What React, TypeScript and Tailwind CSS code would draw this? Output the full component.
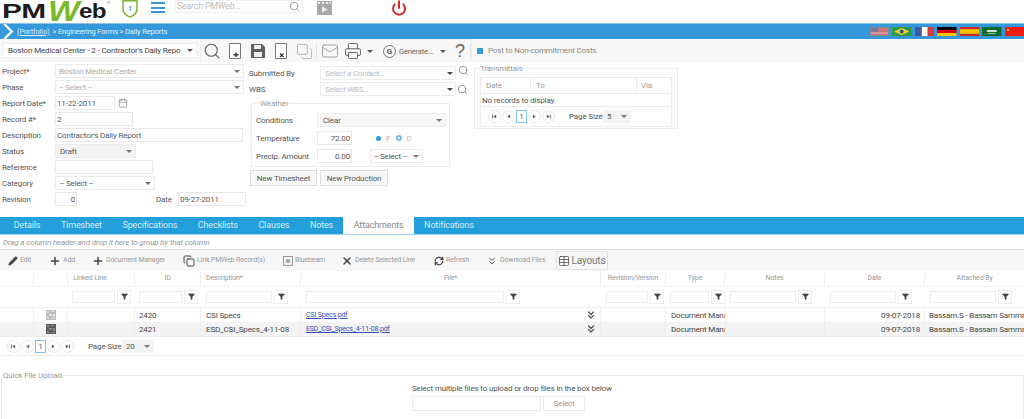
import { ChevronsDown, Filter, Plus, Search, X, RefreshCw, Pencil, Mail, Printer, Copy, Power, Table, Calendar } from 'lucide-react';
import type { ReactNode } from 'react';

const font = { fontFamily: 'Roboto, "Liberation Sans", sans-serif' };

function Caret({ className = 'text-[#777]' }: { className?: string }) {
    return <span className={`w-0 h-0 shrink-0 border-x-[3px] border-x-transparent border-t-[3px] border-t-current ${className}`} />;
}

function Box({ w, children, className = '', right }: { w: string; children?: ReactNode; className?: string; right?: boolean }) {
    return (
        <div className={`${w} h-[14px] border border-[#e8e8e8] bg-white flex items-center px-[1px] overflow-hidden whitespace-nowrap ${right ? 'justify-end' : ''} ${className}`}>
            {children}
        </div>
    );
}

function Drop({ w, text, className = '', bg = 'bg-white', pad = 'pl-[3px]' }: { w: string; text: string; className?: string; bg?: string; pad?: string }) {
    return (
        <div className={`${w} h-[14px] border border-[#ececec] ${bg} flex items-center justify-between ${pad} pr-[3px] whitespace-nowrap overflow-hidden ${className}`}>
            <span>{text}</span>
            <Caret />
        </div>
    );
}

function PagerIcon({ d }: { d: string }) {
    return (
        <span className="w-[13px] h-[13px] rounded-full border border-[#e6e6e6] flex items-center justify-center mr-[1px]">
            <svg viewBox="0 0 6 6" className="w-[5px] h-[5px]"><path d={d} fill="#666" /></svg>
        </span>
    );
}

function Pager({ size, w }: { size: string; w: string }) {
    return (
        <div className="flex items-center text-[8px] text-[#555]">
            <PagerIcon d="M0 0.5 H1 V5.5 H0 Z M5 0.5 V5.5 L1.5 3 Z" />
            <PagerIcon d="M5 0.5 V5.5 L1.5 3 Z" />
            <span className="w-[11px] h-[13px] border border-[#7fc3ea] flex items-center justify-center text-[#666] mr-[1px]">1</span>
            <PagerIcon d="M1 0.5 V5.5 L4.5 3 Z" />
            <PagerIcon d="M1 0.5 V5.5 L4.5 3 Z M5 0.5 H6 V5.5 H5 Z" />
            <span className="ml-[13px] w-[33px] mr-[1px] whitespace-nowrap">Page Size</span>
            <div className={`${w} h-[13px] bg-[#f3f3f3] flex items-center justify-between px-[4px]`}>
                <span>{size}</span>
                <Caret />
            </div>
        </div>
    );
}

function Row({ label, children, h = 'h-[16px]', w = 'w-[53px]' }: { label: string; children: ReactNode; h?: string; w?: string }) {
    return (
        <div className={`flex items-center ${h}`}>
            <span className={`${w} shrink-0 whitespace-nowrap`}>{label}</span>
            {children}
        </div>
    );
}

function Flag({ children, className = '' }: { children: ReactNode; className?: string }) {
    return <svg viewBox="0 0 20 9" preserveAspectRatio="none" className={`w-[19.5px] h-[9px] ${className}`}>{children}</svg>;
}

function Logo() {
    return (
        <div className="flex items-start h-[23px] w-[110px] pl-[2px] shrink-0 leading-none whitespace-nowrap" style={{ fontFamily: '"Liberation Sans", sans-serif' }}>
            <span className="w-[46px] text-[21px] font-bold text-[#1c1c1c] tracking-[-0.5px] scale-x-[1.42] origin-left">PM</span>
            <span className="w-[31px] h-[23px] text-[29px] leading-[23px] font-bold italic text-[#7ab929] tracking-[-1px] scale-x-[1.15] origin-left">W</span>
            <span className="w-[28px] text-[21px] font-bold text-[#1c1c1c] tracking-[-0.5px] scale-x-[1.15] origin-left">eb</span>
            <span className="text-[4px] text-[#333] mt-[1px]">®</span>
        </div>
    );
}

function RowIcon({ dark }: { dark: boolean }) {
    const a = dark ? '#5c5c5c' : '#bdbdbd';
    const b = dark ? '#8a8a8a' : '#dedede';
    return (
        <svg viewBox="0 0 10 10" className="w-[10px] h-[10px]">
            <rect width="10" height="10" fill={a} />
            <path d="M1 1 H3 V3 H1 Z M5 1 H8 V2 H5 Z M3 4 H6 V6 H3 Z M7 4 H9 V7 H7 Z M1 7 H3 V9 H1 Z M5 8 H9 V9 H5 Z" fill={b} />
        </svg>
    );
}

const tabs = ['Details', 'Timesheet', 'Specifications', 'Checklists', 'Clauses', 'Notes', 'Attachments', 'Notifications'];

const cols = 'grid grid-cols-[34px_34px_67px_66px_100px_300px_65px_59px_100px_100px_100px]';

const heads = ['', '', 'Linked Line', 'ID', 'Description*', 'File*', 'Revision/Version', 'Type', 'Notes', 'Date', 'Attached By'];

const filters: [string, string][] = [
    ['', ''],
    ['', ''],
    ['w-[43px]', 'ml-[4px]'],
    ['w-[43px]', 'ml-[4px]'],
    ['w-[66px]', 'ml-[5px]'],
    ['w-[198px]', 'ml-[5px]'],
    ['w-[42px]', 'ml-[5px]'],
    ['w-[39px]', 'ml-[4px]'],
    ['w-[66px]', 'ml-[5px]'],
    ['w-[66px]', 'ml-[5px]'],
    ['w-[66px]', 'ml-[5px]'],
];

const rows = [
    { id: '2420', desc: 'CSI Specs', file: 'CSI Specs.pdf', bg: 'bg-white', dark: false },
    { id: '2421', desc: 'ESD_CSI_Specs_4-11-08', file: 'ESD_CSI_Specs_4-11-08.pdf', bg: 'bg-[#f3f3f3]', dark: true },
];

function GridAction({ icon, label, className = '' }: { icon: ReactNode; label: string; className?: string }) {
    return (
        <span className={`flex items-center gap-[2px] whitespace-nowrap ${className}`}>
            {icon}
            {label}
        </span>
    );
}

export default function App() {
    return (
        <div className="w-[1024px] h-[419px] bg-white overflow-hidden text-[8px] leading-[11px] tracking-[-0.15px] text-[#555]" style={font}>
            {/* top header */}
            <div className="h-[23px] flex items-start">
                <Logo />
                <svg viewBox="0 0 20 22" className="w-[20px] h-[18px] ml-[10px] shrink-0">
                    <path d="M10 1 L18.5 1 V11 C18.5 16 14 19.5 10 21 C6 19.5 1.5 16 1.5 11 V1 Z" fill="none" stroke="#79b52f" strokeWidth="1.8" />
                    <text x="10" y="13" textAnchor="middle" fontSize="8" fill="#3a8fc5" fontWeight="700">1</text>
                </svg>
                <div className="w-[14px] h-[11px] ml-[11px] mt-[2px] flex flex-col justify-between shrink-0">
                    <span className="h-[2px] bg-[#3498db]" />
                    <span className="h-[2px] bg-[#3498db]" />
                    <span className="h-[2px] bg-[#3498db]" />
                </div>
                <div className="ml-[10px] w-[128px] h-[13px] border border-[#efefef] flex items-center justify-between pl-[1px] pr-[2px] italic text-[9px] text-[#bbb]">
                    Search PMWeb...
                    <Search className="w-[11px] h-[11px] text-[#777]" strokeWidth={1.5} />
                </div>
                <svg viewBox="0 0 15 14" className="ml-[14px] mt-[1px] w-[15px] h-[14px]">
                    <rect width="15" height="14" fill="#a8a8a8" />
                    <path d="M1 1 H3 V3 H1 Z M5 1 H7 V3 H5 Z M9 1 H11 V3 H9 Z M12.5 1 H14 V3 H12.5 Z" fill="#e8e8e8" />
                    <path d="M5 5.5 L10.5 8.5 L5 11.5 Z" fill="#eee" />
                </svg>
                <Power className="w-[16px] h-[16px] ml-[59px] text-[#d3262c]" strokeWidth={3} />
            </div>

            {/* breadcrumb */}
            <div className="h-[16px] bg-[#3498db] border-t border-[#8cc4ea] flex items-center text-white text-[7.5px] justify-between">
                <div className="flex items-center">
                    <svg viewBox="0 0 12 16" className="w-[12px] h-[15px] ml-[2px] mr-[3px]"><path d="M2 0 L10 8 L2 16" fill="none" stroke="#fff" strokeWidth="2.5" /></svg>
                    <span className="underline text-[#dcecf8]">(Portfolio)</span>
                    <span className="ml-[3px] text-[#e4f1fa]">&gt; Engineering Forms &gt; Daily Reports</span>
                </div>
                <div className="flex items-center gap-[3px]">
                    <Flag className="border border-[#888]">
                        <rect width="20" height="9" fill="#c97680" /><rect width="8" height="5" fill="#6f79a6" /><rect y="6" width="20" height="1" fill="#e9c9cc" />
                    </Flag>
                    <Flag><rect width="20" height="9" fill="#2f9a45" /><path d="M10 1 L18 4.5 L10 8 L2 4.5 Z" fill="#e6d52f" /><circle cx="10" cy="4.5" r="2" fill="#2d4f94" /></Flag>
                    <Flag><rect width="7" height="9" fill="#42589f" /><rect x="7" width="6" height="9" fill="#fff" /><rect x="13" width="7" height="9" fill="#d83a3f" /></Flag>
                    <Flag><rect width="20" height="3" fill="#000" /><rect y="3" width="20" height="3" fill="#d80000" /><rect y="6" width="20" height="3" fill="#f5c400" /></Flag>
                    <Flag><rect width="20" height="9" fill="#c9252b" /><rect y="2.2" width="20" height="4.6" fill="#f6c400" /></Flag>
                    <Flag><rect width="20" height="9" fill="#0f6b2c" /><rect x="5" y="3" width="10" height="2" fill="#cfe5d5" /><rect x="6" y="6" width="8" height="0.7" fill="#cfe5d5" /></Flag>
                    <Flag><rect width="20" height="9" fill="#ee1c13" /><rect x="2" y="2" width="2" height="2" fill="#f8dd20" /></Flag>
                </div>
            </div>

            {/* toolbar */}
            <div className="h-[23px] bg-[#f7f7f7] flex items-center">
                <div className="ml-[3px] w-[194px] h-[15px] bg-white border border-[#eee] flex items-center justify-between pl-[4px] pr-[3px] whitespace-nowrap text-[#444]">
                    <span className="overflow-hidden w-[177px]">Boston Medical Center - 2 - Contractor's Daily Repo</span>
                    <Caret className="text-[#555]" />
                </div>
                <div className="ml-[3px] h-[23px] border-x border-t border-[#eee] flex items-center pl-[2px] text-[#666]">
                    <Search className="w-[18px] h-[18px] text-[#666]" strokeWidth={1.5} />
                    <svg viewBox="0 0 12 16" className="w-[12px] h-[16px] ml-[8px]"><path d="M.5 .5 H11.5 V15.5 H.5 Z" fill="#fff" stroke="#777" /><path d="M7 9.5 V14 M4.5 11.7 H9.5" stroke="#333" strokeWidth="1.4" /></svg>
                    <svg viewBox="0 0 14 14" className="w-[14px] h-[14px] ml-[10px]">
                        <path d="M0 0 H11 L14 3 V14 H0 Z" fill="#5f5f5f" />
                        <rect x="3" y="1" width="7" height="4" fill="#eee" />
                        <rect x="3" y="8" width="8" height="5" fill="#eee" />
                    </svg>
                    <svg viewBox="0 0 12 16" className="w-[12px] h-[16px] ml-[10px]"><path d="M.5 .5 H11.5 V15.5 H.5 Z" fill="#fff" stroke="#777" /><path d="M5 10.5 L8.5 14 M8.5 10.5 L5 14" stroke="#333" strokeWidth="1.2" /></svg>
                    <Copy className="w-[17px] h-[17px] ml-[9px] text-[#aaa] -scale-100" strokeWidth={1.2} />
                    <span className="w-px h-[16px] bg-[#e3e3e3] ml-[3px]" />
                    <Mail className="w-[18px] h-[18px] ml-[4px] text-[#888]" strokeWidth={1} />
                    <Printer className="w-[18px] h-[18px] ml-[5px] text-[#666]" strokeWidth={1.3} />
                    <Caret className="ml-[5px] text-[#555]" />
                    <span className="w-[13px] h-[13px] ml-[10px] rounded-full border border-[#777] flex items-center justify-center font-bold text-[#555]">G</span>
                    <span className="ml-[3px] whitespace-nowrap w-[33px] text-[7.5px]">Generate...</span>
                    <Caret className="ml-[8px] text-[#555]" />
                    <span className="ml-[9px] w-[10px] text-[18px] leading-none text-[#666]" style={{ fontFamily: '"Liberation Sans", sans-serif' }}>?</span>
                    <span className="w-px h-[16px] bg-[#e3e3e3] ml-[5px]" />
                </div>
                <span className="w-[6px] h-[6px] bg-[#3498db] ml-[5px]" />
                <span className="ml-[5px] whitespace-nowrap text-[#888]">Post to Non-commitment Costs</span>
            </div>

            {/* form */}
            <div className="h-[155px] flex">
                <div className="w-[249px] pl-[2px] pt-[1px] shrink-0">
                    <Row label="Project*">
                        <Drop w="w-[189px]" text="Boston Medical Center" className="text-[#aaa]" />
                    </Row>
                    <Row label="Phase">
                        <Drop w="w-[189px]" text="-- Select --" className="text-[#aaa]" />
                    </Row>
                    <Row label="Report Date*">
                        <Box w="w-[60px]">11-22-2011</Box>
                        <Calendar className="w-[10px] h-[10px] ml-[3px] text-[#777]" strokeWidth={1.5} />
                    </Row>
                    <Row label="Record #*">
                        <Box w="w-[78px]">2</Box>
                    </Row>
                    <Row label="Description">
                        <Box w="w-[188px]">Contractor's Daily Report</Box>
                    </Row>
                    <Row label="Status">
                        <Drop w="w-[81px]" text="Draft" bg="bg-[#f3f3f3]" pad="pl-[4px]" />
                    </Row>
                    <Row label="Reference">
                        <Box w="w-[98px]" />
                    </Row>
                    <Row label="Category">
                        <Drop w="w-[100px]" text="-- Select --" pad="pl-[4px]" />
                    </Row>
                    <Row label="Revision">
                        <Box w="w-[22px]" right className="pr-[1px]">0</Box>
                        <span className="ml-[79px] mr-[6px] w-[16px]">Date</span>
                        <Box w="w-[68px]" className="border-[#bbb]">09-27-2011</Box>
                    </Row>
                </div>

                <div className="w-[225px] shrink-0 pt-[3px]">
                    <Row label="Submitted By" w="w-[71px]">
                        <div className="w-[136px] h-[14px] border border-[#ececec] flex items-center justify-between pl-[4px] pr-[2px] italic text-[#bbb]">
                            Select a Contact...
                            <Caret className="text-[#444]" />
                        </div>
                        <Search className="w-[11px] h-[11px] ml-[2px] -mt-[5px] text-[#666]" strokeWidth={1.5} />
                    </Row>
                    <Row label="WBS" w="w-[71px]">
                        <div className="w-[136px] h-[14px] border border-[#ececec] flex items-center justify-between pl-[4px] pr-[2px] italic text-[#bbb]">
                            Select WBS...
                            <Caret className="text-[#444]" />
                        </div>
                        <Search className="w-[11px] h-[11px] ml-[1px] text-[#666]" strokeWidth={1.5} />
                    </Row>
                    <fieldset className="ml-[2px] mt-[1px] w-[199px] h-[69px] border border-[#ececec] pl-[4px]">
                        <legend className="ml-[4px] text-[#999]">Weather</legend>
                        <div className="mt-[2px]">
                            <Row label="Conditions" h="h-[18px]" w="w-[61px]">
                                <Drop w="w-[129px]" text="Clear" bg="bg-[#f7f7f7]" pad="pl-[5px]" />
                            </Row>
                            <Row label="Temperature" h="h-[18px]" w="w-[61px]">
                                <Box w="w-[35px]" right>72.00</Box>
                                <span className="w-[5px] h-[5px] rounded-full bg-[#2b9ddf] ml-[24px]" />
                                <span className="ml-[5px] text-[#aaa]">F</span>
                                <span className="w-[6px] h-[6px] rounded-full border-2 border-[#72bce8] ml-[6px]" />
                                <span className="ml-[4px] text-[#aaa]">C</span>
                            </Row>
                            <Row label="Precip. Amount" h="h-[18px]" w="w-[61px]">
                                <Box w="w-[35px]" right>0.00</Box>
                                <Drop w="w-[53px]" text="-- Select --" className="ml-[18px]" />
                            </Row>
                        </div>
                    </fieldset>
                    <div className="flex mt-[3px] ml-[1px] gap-[3px]">
                        <button className="w-[67px] h-[16px] border border-[#ddd] bg-[#f8f8f8] whitespace-nowrap">New Timesheet</button>
                        <button className="w-[68px] h-[16px] border border-[#ddd] bg-[#f8f8f8] whitespace-nowrap">New Production</button>
                    </div>
                </div>

                <div className="pt-[1px]">
                    <fieldset className="w-[204px] h-[66px] border border-[#ececec] px-[5px]">
                        <legend className="text-[#999]">Transmittals</legend>
                        <div className="border border-[#ececec] w-[192px] mt-[3px]">
                            <div className="grid grid-cols-[50px_106px_36px] h-[16px] items-center text-[#999] border-b border-[#ececec]">
                                <span className="pl-[5px] border-r border-[#ececec] h-full flex items-center">Date</span>
                                <span className="pl-[5px] border-r border-[#ececec] h-full flex items-center">To</span>
                                <span className="pl-[4px]">Via</span>
                            </div>
                            <div className="h-[13px] pl-[1px] flex items-center border-b border-[#ececec]">No records to display.</div>
                            <div className="h-[19px] pl-[7px] flex items-center">
                                <Pager size="5" w="w-[28px]" />
                            </div>
                        </div>
                    </fieldset>
                </div>
            </div>

            {/* tabs */}
            <div className="h-[18px] bg-[#23a0db] border-b border-[#9dd3f0] flex pl-[3.5px] text-[9px] text-[#d5ecf9]">
                {tabs.map((t) => (
                    <span key={t} className={`px-[10.3px] flex items-center whitespace-nowrap ${t === 'Attachments' ? 'bg-white text-[#888]' : ''}`}>{t}</span>
                ))}
            </div>
            <div className="h-[15px] flex items-center pl-[3px] italic text-[#999] border-b border-[#ddd]">
                Drag a column header and drop it here to group by that column
            </div>

            {/* grid toolbar */}
            <div className="h-[21px] bg-[#f7f7f7] flex items-center pl-[8px] text-[7px] text-[#999]">
                <GridAction icon={<Pencil className="w-[10px] h-[10px] text-[#444] fill-[#444]" />} label="Edit" className="w-[41px]" />
                <GridAction icon={<Plus className="w-[12px] h-[12px] text-[#444]" strokeWidth={3} />} label="Add" className="w-[43px]" />
                <GridAction icon={<Plus className="w-[12px] h-[12px] text-[#444]" strokeWidth={3} />} label="Document Manager" className="w-[91px]" />
                <GridAction icon={<Copy className="w-[12px] h-[12px] text-[#444]" strokeWidth={2} />} label="Link PMWeb Record(s)" className="w-[100px]" />
                <GridAction icon={<span className="w-[10px] h-[10px] border border-[#999] flex items-center justify-center"><span className="w-[4px] h-[4px] bg-[#aaa]" /></span>} label="Bluebeam" className="w-[58px]" />
                <GridAction icon={<X className="w-[12px] h-[12px] text-[#444]" strokeWidth={3} />} label="Delete Selected Line" className="w-[93px]" />
                <GridAction icon={<RefreshCw className="w-[10px] h-[10px] text-[#444]" strokeWidth={3} />} label="Refresh" className="w-[52px]" />
                <GridAction icon={<ChevronsDown className="w-[12px] h-[12px] text-[#555]" strokeWidth={2} />} label="Download Files" className="w-[70px]" />
                <span className="h-[19px] w-[52px] border border-[#e3e3e3] flex items-center justify-center gap-[1px] text-[10px] text-[#777] whitespace-nowrap">
                    <Table className="w-[12px] h-[12px] text-[#444]" strokeWidth={1.5} />
                    Layouts
                </span>
            </div>

            {/* grid */}
            <div className="w-[1024px] overflow-hidden">
                <div className={`${cols} h-[16px] text-[7px] text-[#999] items-center border-b border-[#f3f3f3]`}>
                    {heads.map((h, i) => (
                        <span key={i} className={`h-full flex items-center border-r border-[#eee] whitespace-nowrap overflow-hidden ${[3, 5, 6, 7, 8, 9, 10].includes(i) ? 'justify-center' : 'pl-[5px]'}`}>{h}</span>
                    ))}
                </div>
                <div className={`${cols} h-[21px] items-center border-b border-[#ececec] pb-[1px]`}>
                    {filters.map(([w, ml], i) => (
                        <div key={i} className="flex items-center overflow-hidden">
                            {w && (
                                <>
                                    <span className={`h-[12px] border border-[#ececec] shrink-0 ${w} ${ml}`} />
                                    <span className="w-[14px] h-[14px] ml-[2px] border border-[#eee] flex items-center justify-center shrink-0">
                                        <Filter className="w-[7px] h-[7px] text-[#444] fill-[#444]" />
                                    </span>
                                </>
                            )}
                        </div>
                    ))}
                </div>
                {rows.map((r) => (
                    <div key={r.id} className={`${cols} h-[14px] items-center ${r.bg} whitespace-nowrap text-[#444]`}>
                        <span className="h-full border-r border-[#eee]" />
                        <span className="h-full border-r border-[#eee] flex items-center justify-center"><RowIcon dark={r.dark} /></span>
                        <span className="h-full border-r border-[#eee]" />
                        <span className="h-full border-r border-[#eee] pl-[4px] flex items-center">{r.id}</span>
                        <span className="h-full border-r border-[#eee] pl-[5px] flex items-center">{r.desc}</span>
                        <span className="h-full border-r border-[#eee] pl-[5px] flex items-center justify-between pr-[3px]">
                            <span className="text-[7px] text-[#2f4fb5] underline">{r.file}</span>
                            <ChevronsDown className="w-[12px] h-[12px] text-[#555]" strokeWidth={2.5} />
                        </span>
                        <span className="h-full border-r border-[#eee]" />
                        <span className="h-full pl-[5px] flex items-center overflow-hidden">Document Manager</span>
                        <span className="h-full border-x border-[#eee]" />
                        <span className="h-full border-r border-[#eee] flex items-center justify-end pr-[4px]">09-07-2018</span>
                        <span className="h-full pl-[4px] flex items-center overflow-hidden">Bassam.S - Bassam Samman</span>
                    </div>
                ))}
                <div className="h-[20px] flex items-center pl-[7px] border-t border-b border-[#ececec]">
                    <Pager size="20" w="w-[32px]" />
                </div>
            </div>

            {/* quick upload */}
            <fieldset className="mt-[14px] ml-[1px] h-[60px] border border-[#ececec]">
                <legend className="ml-[1px] text-[#999]">Quick File Upload</legend>
                <div className="pl-[410px] mt-[2px] flex flex-col items-start">
                    <span className="whitespace-nowrap">Select multiple files to upload or drop files in the box below</span>
                    <div className="flex mt-[2px]">
                        <span className="w-[129px] h-[15px] border border-[#ececec]" />
                        <span className="ml-[2px] w-[42px] h-[15px] border border-[#ececec] text-[#999] flex items-center justify-center">Select</span>
                    </div>
                </div>
            </fieldset>
        </div>
    );
}
